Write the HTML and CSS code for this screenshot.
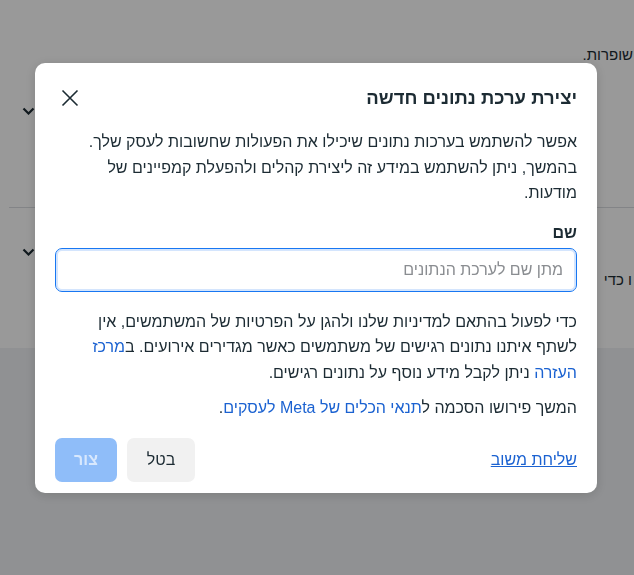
FILE: index.html
```html
<!DOCTYPE html>
<html lang="he" dir="rtl">
<head>
    <meta charset="UTF-8">
    <title>יצירת ערכת נתונים חדשה</title>
    <link rel="stylesheet" href="styles.css">
</head>
<body>
    <div class="page">
        <div class="page-card">
            <p class="page-note">שופרות.</p>
            <div class="page-section first">
                <span class="page-chevron">
                    <svg width="13" height="8" viewBox="0 0 13 8"><path d="M1.5 1.5 L6.5 6.5 L11.5 1.5" fill="none" stroke="#1c2b33" stroke-width="2.2"/></svg>
                </span>
            </div>
            <div class="page-divider"></div>
            <div class="page-section second">
                <p class="page-row-text">ו כדי</p>
                <span class="page-chevron">
                    <svg width="13" height="8" viewBox="0 0 13 8"><path d="M1.5 1.5 L6.5 6.5 L11.5 1.5" fill="none" stroke="#1c2b33" stroke-width="2.2"/></svg>
                </span>
            </div>
        </div>
    </div>

    <div class="overlay">
        <div class="modal">
            <div class="modal-header">
                <h2 class="modal-title">יצירת ערכת נתונים חדשה</h2>
                <button class="modal-close" type="button">
                    <svg width="18" height="18" viewBox="0 0 18 18"><path d="M1.5 1.5 L16.5 16.5 M16.5 1.5 L1.5 16.5" stroke="#1c2b33" stroke-width="1.6" fill="none"/></svg>
                </button>
            </div>
            <div class="modal-body">
                <p class="modal-text">אפשר להשתמש בערכות נתונים שיכילו את הפעולות שחשובות לעסק שלך. בהמשך, ניתן להשתמש במידע זה ליצירת קהלים ולהפעלת קמפיינים של מודעות.</p>
                <label class="field-label" for="dataset-name">שם</label>
                <input class="field-input" id="dataset-name" type="text" placeholder="מתן שם לערכת הנתונים">
                <p class="modal-text policy">כדי לפעול בהתאם למדיניות שלנו ולהגן על הפרטיות של המשתמשים, אין לשתף איתנו נתונים רגישים של משתמשים כאשר מגדירים אירועים. ב<a href="#" class="text-link">מרכז העזרה</a> ניתן לקבל מידע נוסף על נתונים רגישים.</p>
                <p class="modal-text terms">המשך פירושו הסכמה ל<a href="#" class="text-link">תנאי הכלים של Meta לעסקים</a>.</p>
            </div>
            <div class="modal-footer">
                <a href="#" class="feedback-link">שליחת משוב</a>
                <div class="modal-actions">
                    <button class="btn btn-cancel" type="button">בטל</button>
                    <button class="btn btn-create" type="button" disabled>צור</button>
                </div>
            </div>
        </div>
    </div>
</body>
</html>
```

FILE: styles.css
```css
* {
    margin: 0;
    padding: 0;
    box-sizing: border-box;
}
html, body {
    height: 100%;
}
body {
    font-family: "Liberation Sans", Arial, "Noto Sans", sans-serif;
    background: #f0f2f5;
    color: #1c2b33;
    overflow: hidden;
}

/* page behind the dialog */
.page-card {
    background: #fff;
    height: 348px;
    padding-top: 45px;
}
.page-note {
    font-size: 15px;
    line-height: 20px;
    padding-right: 1px;
}
.page-section {
    display: flex;
    justify-content: space-between;
    padding-left: 22px;
}
.page-section.first {
    height: 142px;
    padding-top: 42px;
}
.page-section.second {
    padding-top: 40px;
}
.page-chevron {
    display: block;
    height: 8px;
    margin-right: auto;
}
.page-chevron svg {
    display: block;
}
.page-row-text {
    font-size: 15px;
    line-height: 20px;
    margin-top: 22px;
    padding-right: 2px;
}
.page-divider {
    height: 1px;
    background: #dadde1;
    margin-left: 9px;
}

/* dialog */
.overlay {
    position: fixed;
    top: 0;
    left: 0;
    right: 0;
    bottom: 0;
    background: rgba(0, 0, 0, 0.4);
    display: flex;
    justify-content: center;
    align-items: flex-start;
    padding-top: 63px;
    padding-right: 2px;
}
.modal {
    width: 562px;
    background: #fff;
    border-radius: 10px;
    box-shadow: 0 2px 12px rgba(0, 0, 0, 0.15);
    direction: rtl;
}
.modal-header {
    display: flex;
    align-items: center;
    justify-content: space-between;
    padding: 20px 20px 16px 20px;
}
.modal-title {
    font-size: 18.5px;
    line-height: 28px;
    font-weight: bold;
}
.modal-close {
    width: 30px;
    height: 30px;
    border: 0;
    background: none;
    display: flex;
    align-items: center;
    justify-content: center;
    cursor: pointer;
}
.modal-body {
    padding: 0 20px;
}
.modal-text {
    font-size: 16px;
    line-height: 25.5px;
}
.field-label {
    display: block;
    font-size: 16px;
    font-weight: bold;
    line-height: 20px;
    margin-top: 17px;
}
.field-input {
    display: block;
    width: 100%;
    height: 44px;
    margin-top: 5px;
    border: 1px solid #1877f2;
    border-radius: 7px;
    box-shadow: inset 0 0 0 2px #d4e5fd;
    padding: 0 13px;
    font-family: inherit;
    font-size: 16px;
    color: #1c2b33;
    outline: none;
}
.field-input::placeholder {
    color: #8a8d91;
}
.modal-text.policy {
    margin-top: 17px;
}
.modal-text.terms {
    margin-top: 10px;
}
.text-link {
    color: #1b62d1;
    text-decoration: none;
}

.modal-footer {
    display: flex;
    align-items: center;
    justify-content: space-between;
    padding: 17px 20px 11px 20px;
}
.feedback-link {
    color: #1b62d1;
    font-size: 16px;
    text-decoration: underline;
}
.modal-actions {
    display: flex;
    gap: 10px;
}
.btn {
    height: 44px;
    border: 0;
    border-radius: 7px;
    padding: 0;
    font-family: inherit;
    font-size: 16px;
    cursor: pointer;
}
.btn-cancel {
    background: #f1f1f1;
    color: #1c2b33;
    width: 68px;
}
.btn-create {
    background: #8fbdf9;
    color: rgba(255, 255, 255, 0.65);
    font-weight: bold;
    width: 62px;
    cursor: default;
}
```
